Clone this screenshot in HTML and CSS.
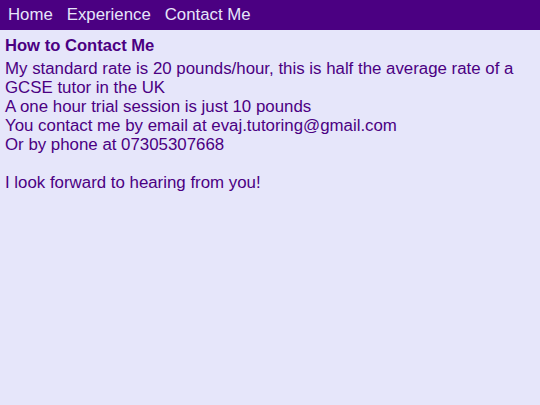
FILE: index.html
```html
<!DOCTYPE html>
<html>
<head>
<meta charset="utf-8">
<link rel="stylesheet" href="styles.css">
</head>
<body>
<nav class="nav">
  <a class="nav-link" href="#">Home</a>
  <a class="nav-link" href="#">Experience</a>
  <a class="nav-link" href="#">Contact Me</a>
</nav>
<main class="content">
  <h1 class="title">How to Contact Me</h1>
  <p class="text">My standard rate is 20 pounds/hour, this is half the average rate of a GCSE tutor in the UK<br>
  A one hour trial session is just 10 pounds<br>
  You contact me by email at evaj.tutoring@gmail.com<br>
  Or by phone at 07305307668<br>
  <br>
  I look forward to hearing from you!</p>
</main>
</body>
</html>
```

FILE: styles.css
```css
html, body {
  margin: 0;
  padding: 0;
  background: #e6e6fa;
  font-family: "Liberation Sans", Arial, sans-serif;
  color: #4b0082;
  height: 100%;
}
.nav {
  background: #4b0082;
  display: flex;
  gap: 14px;
  padding: 0 8px;
  height: 30px;
  align-items: center;
}
.nav-link {
  color: #e6e6fa;
  text-decoration: none;
  font-size: 16.8px;
}
.content {
  padding: 6px 5px;
}
.title {
  font-size: 16.6px;
  font-weight: bold;
  margin: 0 0 4px;
  line-height: 19px;
}
.text {
  font-size: 16.85px;
  line-height: 19px;
  margin: 0;
}
```
